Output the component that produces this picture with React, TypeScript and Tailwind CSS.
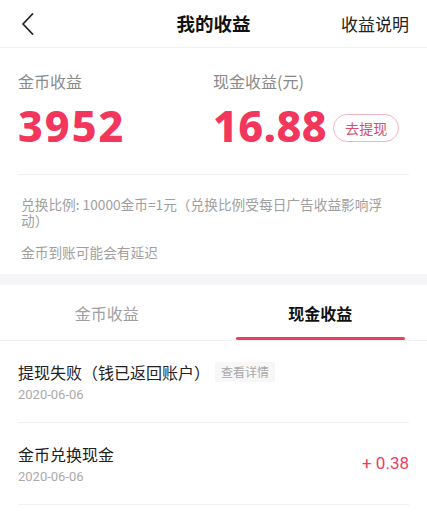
const font = { fontFamily: '"Noto Sans CJK SC", "Noto Sans", sans-serif' };
const numFont = { fontFamily: '"Noto Sans", sans-serif' };

function Header() {
  return (
    <div className="relative flex h-[48px] items-center justify-center border-b border-[#f0f0f0]">
      <svg
        className="absolute left-[20px] top-[12px]"
        width="16"
        height="24"
        viewBox="0 0 16 24"
        fill="none"
        stroke="#222"
        strokeWidth="1.8"
        strokeLinecap="round"
        strokeLinejoin="round"
      >
        <path d="M12.5 2 L3 12 L12.5 22" />
      </svg>
      <span className="text-[18.5px] font-bold text-[#111]">我的收益</span>
      <span className="absolute right-[18px] text-[17px] text-[#222]">收益说明</span>
    </div>
  );
}

function Summary() {
  return (
    <div className="px-[18px]">
      <div className="flex pt-[22px] pb-[24px] border-b border-[#f0f0f0]">
        <div className="w-[195px]">
          <div className="text-[16px] leading-[22px] text-[#8a8a8a]">金币收益</div>
          <div
            className="mt-[10px] text-[43px] leading-[48px] font-extrabold tracking-[2px] text-[#f2365c]"
            style={numFont}
          >
            3952
          </div>
        </div>
        <div>
          <div className="text-[16px] leading-[22px] text-[#8a8a8a]">现金收益(元)</div>
          <div className="mt-[10px] flex items-center">
            <span className="text-[43px] leading-[48px] font-extrabold tracking-[0.5px] text-[#f2365c]" style={numFont}>
              16.88
            </span>
            <span className="ml-[6px] mt-[4px] rounded-full border border-[#f0b3c0] px-[11px] py-[2px] text-[14px] leading-[22px] text-[#d2506e]">
              去提现
            </span>
          </div>
        </div>
      </div>
    </div>
  );
}

function Notes() {
  return (
    <div className="px-[21px] pt-[21px] pb-[12px] text-[13.7px] text-[#a0a0a0]">
      <div className="w-[368px] leading-[16px]">兑换比例: 10000金币=1元（兑换比例受每日广告收益影响浮动）</div>
      <div className="mt-[14px] leading-[20px]">金币到账可能会有延迟</div>
    </div>
  );
}

function Tabs() {
  return (
    <div className="flex h-[56px] border-b border-[#f2f2f2]">
      <div className="flex w-1/2 items-center justify-center text-[16px] text-[#a0a0a0]">金币收益</div>
      <div className="relative flex w-1/2 items-center justify-center text-[16px] font-bold text-[#111]">
        现金收益
        <div className="absolute bottom-0 left-[22px] right-[22px] h-[3px] rounded-full bg-[#e8405f]" />
      </div>
    </div>
  );
}

function Row({ title, date, tag, amount }: { title: string; date: string; tag?: string; amount?: string }) {
  return (
    <div className="flex items-center justify-between border-b border-[#f0f0f0] h-[82px]">
      <div>
        <div className="flex items-center">
          <span className="text-[16px] leading-[24px] text-[#222]">{title}</span>
          {tag && (
            <span className="ml-[5px] rounded-[2px] bg-[#f7f7f7] px-[6px] text-[12px] leading-[20px] text-[#a8a8a8]">
              {tag}
            </span>
          )}
        </div>
        <div className="mt-[2px] text-[13px] leading-[18px] text-[#aaaaaa]" style={{ fontFamily: '"Roboto", sans-serif' }}>
          {date}
        </div>
      </div>
      {amount && (
        <span className="text-[17px] text-[#ee3c60]" style={{ fontFamily: '"Roboto", sans-serif' }}>
          {amount}
        </span>
      )}
    </div>
  );
}

export default function App() {
  return (
    <div className="min-h-[523px] w-[427px] bg-white" style={font}>
      <Header />
      <Summary />
      <Notes />
      <div className="h-[11px] bg-[#f5f5f7]" />
      <Tabs />
      <div className="px-[18px]">
        <Row title="提现失败（钱已返回账户）" tag="查看详情" date="2020-06-06" />
        <Row title="金币兑换现金" date="2020-06-06" amount="+ 0.38" />
      </div>
    </div>
  );
}
